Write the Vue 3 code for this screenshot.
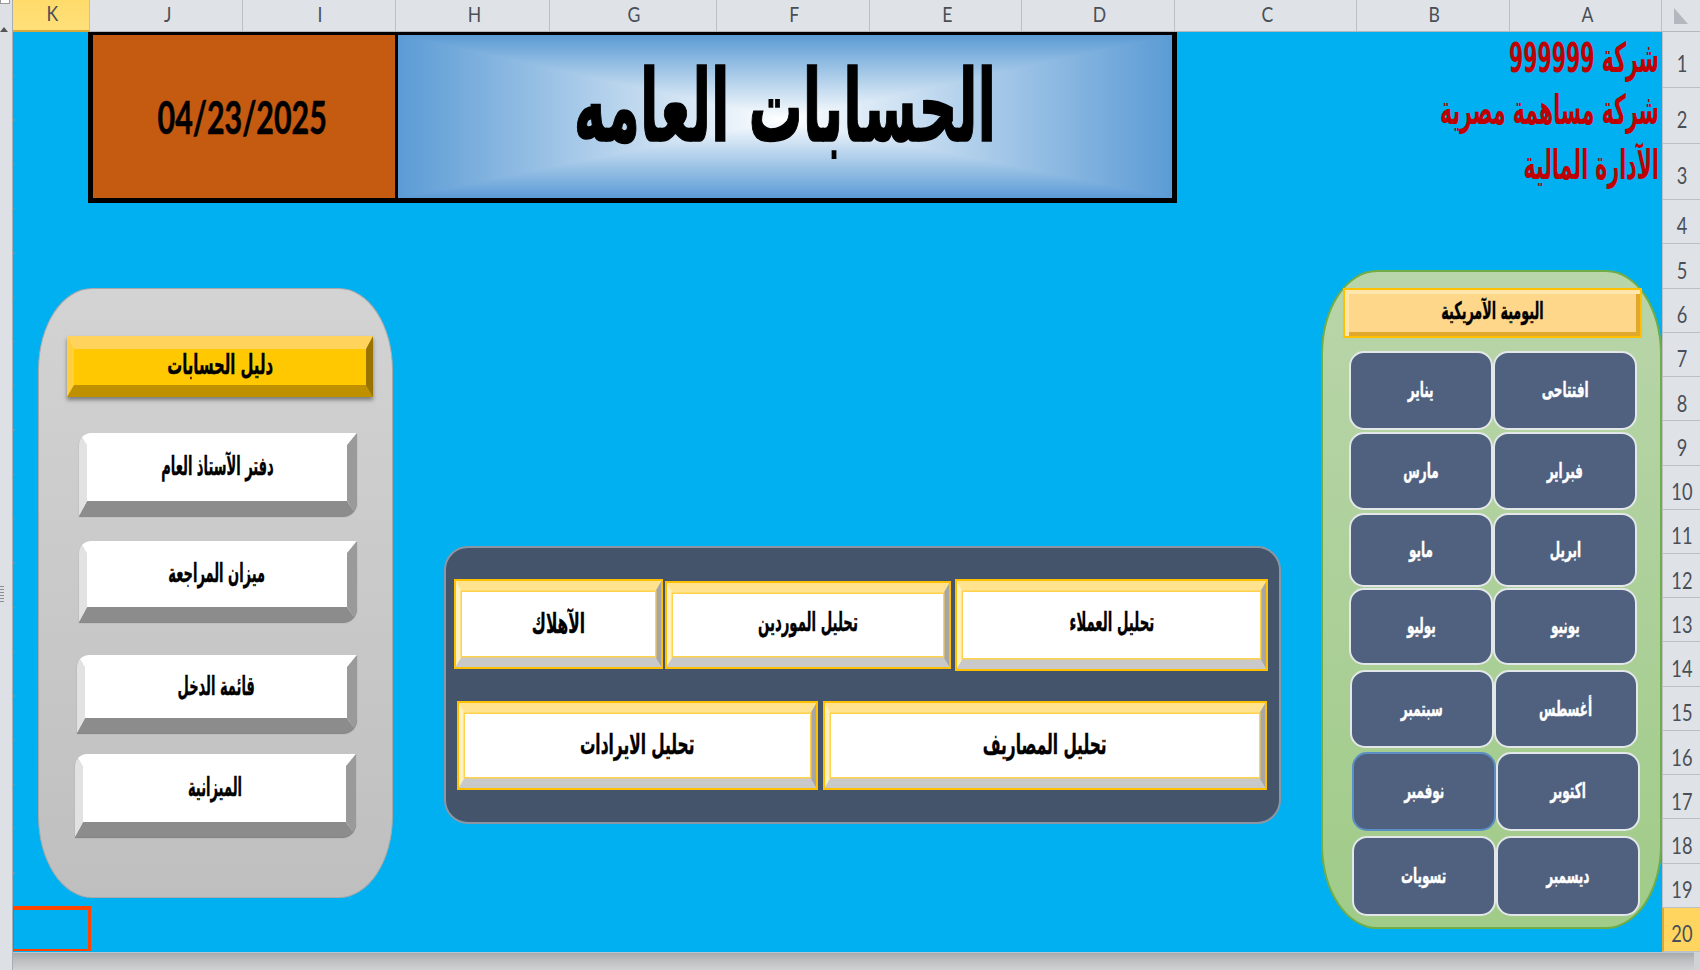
<script setup>
const cols = [
  { l: 'K', w: 77, on: true }, { l: 'J', w: 153 }, { l: 'I', w: 153 }, { l: 'H', w: 154 },
  { l: 'G', w: 167 }, { l: 'F', w: 153 }, { l: 'E', w: 152 }, { l: 'D', w: 153 },
  { l: 'C', w: 182 }, { l: 'B', w: 153 }, { l: 'A', w: 152 },
]
const rows = [56, 56, 56, 44.5, 44.5, 44.3, 44.3, 44.3, 44.3, 44.3, 44.3, 44.3, 44.3, 44.3, 44.3, 44.3, 44.3, 44.3, 44.3, 44.3]
const months = [
  { a: 'يناير', b: 'افتتاحى', cls: 'm1' },
  { a: 'مارس', b: 'فبراير', cls: 'm2' },
  { a: 'مايو', b: 'ابريل', cls: 'm3' },
  { a: 'يوليو', b: 'يونيو', cls: 'm4' },
  { a: 'سبتمبر', b: 'أغسطس', cls: 'm5' },
  { a: 'نوفمبر', b: 'اكتوبر', cls: 'm6', sel: true },
  { a: 'تسويات', b: 'ديسمبر', cls: 'm7' },
]
</script>

<template>
  <div class="app">
    <div class="strip">
      <div class="strip-box"></div>
      <svg class="strip-arrow" width="8" height="6" viewBox="0 0 8 6"><path d="M0 6 L4 1 L8 6 Z" fill="#555" /></svg>
      <div class="strip-dots"></div>
    </div>
    <div class="main">
      <div class="colbar">
        <div v-for="c in cols" :key="c.l" class="colhd" :class="{ on: c.on }" :style="{ width: c.w + 'px' }"><span class="hdtxt">{{ c.l }}</span></div>
        <div class="corner"><svg width="16" height="18" viewBox="0 0 16 18"><path d="M1 1 L15 17 L1 17 Z" fill="#b4b8be" /></svg></div>
      </div>
      <div class="middle">
        <div class="sheet">
          <div class="top">
            <div class="banner">
              <div class="date"><span class="date-txt">04/23/2025</span></div>
              <div class="title"><span class="title-txt" dir="rtl">الحسابات العامه</span></div>
            </div>
            <div class="company" dir="rtl">
              <div class="cline c1"><span class="ct" dir="rtl">شركة 999999</span></div>
              <div class="cline c2"><span class="ct" dir="rtl">شركة مساهمة مصرية</span></div>
              <div class="cline c3"><span class="ct" dir="rtl">الآدارة المالية</span></div>
            </div>
          </div>
          <div class="lower">
            <div class="lpanel">
              <div class="gold"><span class="ar gold-t" dir="rtl">دليل الحسابات</span></div>
              <div class="wbtn w1"><span class="ar w-t" dir="rtl">دفتر الآستاذ العام</span></div>
              <div class="wbtn w2"><span class="ar w-t" dir="rtl">ميزان المراجعة</span></div>
              <div class="wbtn w3"><span class="ar w-t" dir="rtl">قائمة الدخل</span></div>
              <div class="wbtn w4"><span class="ar w-t" dir="rtl">الميزانية</span></div>
            </div>
            <div class="cpanel">
              <div class="crow r1">
                <div class="ybtn y1"><div class="yin"><span class="ar y-t big" dir="rtl">الآهلاك</span></div></div>
                <div class="ybtn y2"><div class="yin"><span class="ar y-t" dir="rtl">تحليل الموردين</span></div></div>
                <div class="ybtn y3"><div class="yin"><span class="ar y-t" dir="rtl">تحليل العملاء</span></div></div>
              </div>
              <div class="crow r2">
                <div class="ybtn y4"><div class="yin"><span class="ar y-t big" dir="rtl">تحليل الايرادات</span></div></div>
                <div class="ybtn y5"><div class="yin"><span class="ar y-t big" dir="rtl">تحليل المصاريف</span></div></div>
              </div>
            </div>
            <div class="rpanel">
              <div class="rhead"><span class="ar rhead-t" dir="rtl">اليومية الآمريكية</span></div>
              <div v-for="m in months" :key="m.a" class="mrow" :class="m.cls">
                <div class="mbtn" :class="{ sel: m.sel }"><span class="ar m-t" dir="rtl">{{ m.a }}</span></div>
                <div class="mbtn"><span class="ar m-t" dir="rtl">{{ m.b }}</span></div>
              </div>
            </div>
          </div>
          <div class="cursor"></div>
        </div>
        <div class="rowbar">
          <div v-for="(h, i) in rows" :key="i" class="rowhd" :class="{ on: i === 19 }" :style="{ height: h + 'px' }"><span class="hdtxt">{{ i + 1 }}</span></div>
        </div>
      </div>
      <div class="foot"></div>
    </div>
  </div>
</template>

<style>
html, body { margin: 0; padding: 0; background: #d0d2d5; }
</style>

<style scoped>
.app { width: 1700px; height: 970px; display: flex; overflow: hidden; font-family: "DejaVu Sans", sans-serif; background: #d0d2d5; }
.strip { width: 13px; flex: none; background: #dde1e6; border-right: 1px solid #a9adb3; box-sizing: border-box; position: relative; display: flex; flex-direction: column; }
.strip-box { width: 8px; height: 3px; background: #fff; border: 1px solid #999; border-top: 0; }
.strip-arrow { margin: 22px 0 0 0; }
.strip-dots { position: absolute; left: 0; top: 586px; width: 4px; height: 16px; background: repeating-linear-gradient(#8a8f96 0 1px, transparent 1px 3px); }
.main { flex: 1; display: flex; flex-direction: column; min-width: 0; }
.colbar { height: 32px; display: flex; flex: none; }
.colhd { box-sizing: border-box; height: 32px; padding: 0 0 4px 3px; background: #dfe3e8; border-right: 1px solid #bcc0c6; border-bottom: 1px solid #b5b9bf; display: flex; align-items: center; justify-content: center; color: #4a4f57; }
.colhd.on { background: linear-gradient(#ffdb6b, #ffe07a); border-bottom: 2px solid #d6a93a; }
.hdtxt { font-family: Lato, sans-serif; font-size: 24px; display: inline-block; transform: scaleX(.76); line-height: 1; }
.colhd .hdtxt { font-size: 22px; transform: scaleX(.8); }
.corner { flex: 1; background: #dfe3e8; border-bottom: 1px solid #b5b9bf; display: flex; align-items: center; justify-content: center; box-sizing: border-box; }
.middle { display: flex; height: 920px; flex: none; }
.sheet { width: 1649px; flex: none; background: #00b0f0; position: relative; overflow: hidden; }
.sheet::before { content: ""; position: absolute; left: 0; top: 0; width: 2px; height: 100%; background: repeating-linear-gradient(transparent 0 43px, #3fa6d8 43px 44.3px); }
.rowbar { flex: 1; display: flex; flex-direction: column; }
.rowhd { box-sizing: border-box; padding-top: 8px; background: #dfe3e8; border-bottom: 1px solid #bcc0c6; border-left: 1px solid #bcc0c6; display: flex; align-items: center; justify-content: center; color: #4a4f57; }
.rowhd.on { background: #ffd55f; border-left: 2px solid #d6a93a; }
.foot { height: 18px; flex: none; margin-right: 6px; border-top: 1px solid #b6c6d2; background: linear-gradient(#a7a9ab, #bcbec0 40%, #d2d3d5); }

.top { display: flex; height: 171px; padding-left: 75px; }
.banner { width: 1089px; height: 171px; flex: none; box-sizing: border-box; border: 3px solid #000; border-width: 3px 5px 5px 5px; display: flex; background: #000; }
.date { width: 302px; flex: none; padding-right: 4px; box-sizing: border-box; background: #c55a11; display: flex; align-items: center; justify-content: center; }
.date-txt { font-family: Lato, sans-serif; font-weight: 700; font-size: 46px; color: #000; display: inline-block; transform: scaleX(.66); line-height: 1; -webkit-text-stroke: .6px #000; }
.title { flex: 1; min-width: 0; margin-left: 3px; padding-bottom: 20px; box-sizing: border-box; display: flex; align-items: center; justify-content: center; background-image: linear-gradient(to right, #5b9bd5, #ffffff 50%, #5b9bd5), linear-gradient(to bottom, #5b9bd5, #ffffff 52%, #5b9bd5); background-blend-mode: darken; }
.title-txt { font-weight: 700; font-size: 100px; color: #000; display: inline-block; line-height: 1; white-space: nowrap; transform: scaleX(.54); -webkit-text-stroke: 1.5px #000; }
.company { flex: 1; padding-right: 3px; display: flex; flex-direction: column; }
.cline { display: flex; align-items: center; justify-content: flex-start; }
.c1, .c2 { height: 52px; }
.c3 { height: 58px; }
.ct { font-weight: 700; font-size: 41px; color: #c00000; line-height: 1; display: inline-block; white-space: nowrap; transform: scaleX(.5); transform-origin: 100% 50%; }

.lower { display: flex; align-items: flex-start; margin-top: 67px; }
.ar { font-weight: 700; color: #000; line-height: 1; display: inline-block; white-space: nowrap; -webkit-text-stroke: .4px currentColor; }

.lpanel { width: 355px; height: 610px; margin: 18px 0 0 25px; flex: none; box-sizing: border-box; border: 1px solid #a9a9a9; border-radius: 54px / 82px; background: linear-gradient(#d3d3d3, #bfbfbf); padding-top: 47px; }
.gold { width: 306px; height: 61px; margin-left: 28px; padding-bottom: 6px; box-sizing: border-box; border-style: solid; border-width: 13px 7px 12px 7px; border-color: #ffd35c #997300 #bf9000 #ffcf40; background: #ffc800; box-shadow: 0 3px 4px rgba(0, 0, 0, .4); display: flex; align-items: center; justify-content: center; }
.gold-t { font-size: 27px; transform: scaleX(.55); }
.wbtn { width: 278px; height: 83px; box-sizing: border-box; padding-bottom: 14px; border-style: solid; border-width: 12px 10px 15px 8px; border-color: #fff #9a9a9a #8c8c8c #e2e2e2; background: #fff; border-radius: 12px 0 14px 0; display: flex; align-items: center; justify-content: center; box-shadow: 0 1px 1px rgba(60, 60, 60, .5); }
.w-t { font-size: 26px; transform: scaleX(.5); }
.w1 { margin: 36px 0 0 40px; }
.w2 { margin: 25px 0 0 40px; height: 81px; }
.w3 { margin: 33px 0 0 38px; width: 280px; height: 78px; }
.w4 { margin: 21px 0 0 36px; width: 281px; }

.cpanel { width: 837px; height: 278px; margin: 276px 0 0 51px; flex: none; box-sizing: border-box; border: 2px solid #8b96a5; border-radius: 24px; background: #44546a; }
.crow { display: flex; }
.r1 { padding: 32px 0 0 9px; align-items: flex-start; }
.r2 { padding: 32px 0 0 12px; }
.ybtn { box-sizing: border-box; border-style: solid; border-width: 12px 7px 12px 7px; border-color: #ffe38f #a6a6a6 #c9c9c9 #fff0c0; outline: 2px solid #ffc000; outline-offset: -1px; background: #fff; display: flex; }
.yin { flex: 1; background: #fff; box-shadow: 0 0 0 1.5px #ffd24d; display: flex; align-items: center; justify-content: center; }
.y2 .yin, .y3 .yin { padding-bottom: 6px; }
.y4 .yin, .y5 .yin { padding-bottom: 2px; }
.y-t { font-size: 26px; transform: scaleX(.51); }
.y-t.big { font-size: 28px; transform: scaleX(.55); }
.y1 { width: 207px; height: 88px; }
.y2 { width: 284px; height: 86px; margin: 2px 0 0 4px; }
.y3 { width: 311px; height: 90px; margin-left: 6px; }
.y4 { width: 359px; height: 87px; }
.y5 { width: 442px; height: 87px; margin-left: 7px; }

.rpanel { width: 341px; height: 659px; margin: 0 0 0 40px; flex: none; box-sizing: border-box; border: 2px solid #70ad47; border-radius: 56px / 84px; background: linear-gradient(#b9d5aa, #a0cb88); padding-top: 16px; }
.rhead { width: 299px; height: 50px; margin-left: 20px; padding-bottom: 5px; box-sizing: border-box; border: 2px solid #ffc000; display: flex; background: #ffd78a; align-items: center; justify-content: center; box-shadow: inset 4px 4px 0 #ffe6ad, inset -4px -4px 0 #e0a92e; }
.rhead-t { font-size: 24px; transform: scaleX(.53); }
.mrow { display: flex; }
.mbtn { box-sizing: border-box; width: 144px; flex: none; background: #50617f; border: 2px solid #e3e7ea; border-radius: 15px; display: flex; align-items: center; justify-content: center; }
.mbtn.sel { border-color: #5b8ec4; }
.m-t { font-size: 21px; color: #fff; transform: scaleX(.57); }
.m1 { height: 79px; margin: 13px 0 0 26px; }
.m2 { height: 78px; margin: 2px 0 0 26px; }
.m3 { height: 74px; margin: 3px 0 0 26px; }
.m4 { height: 77px; margin: 1px 0 0 26px; }
.m5 { height: 78px; margin: 5px 0 0 27px; }
.m6 { height: 79px; margin: 4px 0 0 29px; }
.m7 { height: 80px; margin: 5px 0 0 29px; }

.cursor { position: absolute; left: 0; top: 874px; width: 78px; height: 45px; box-sizing: border-box; border-style: solid; border-color: #ff4500; border-width: 4px 3px 2px 1px; }
</style>
